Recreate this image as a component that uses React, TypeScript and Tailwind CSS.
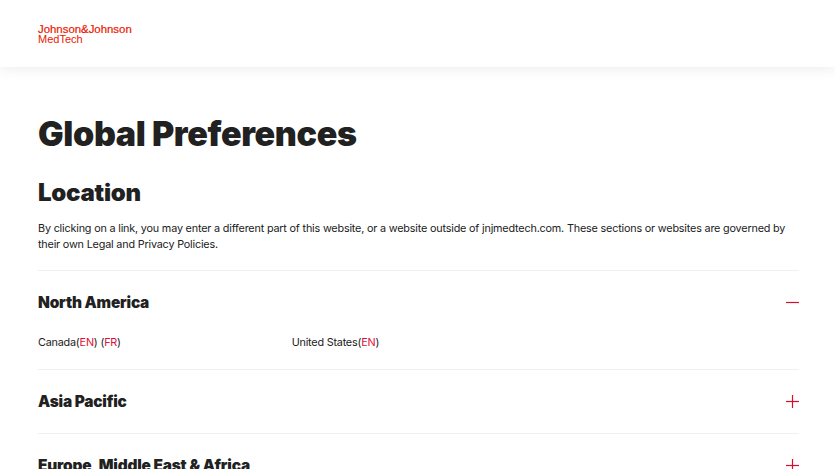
import React from "react";

function Region({ title, open, children }: { title: string; open?: boolean; children?: React.ReactNode }) {
  return (
    <section className="border-t border-[#f0f0f0]">
      <div className="flex h-[63px] items-center justify-between">
        <h3 className="text-[15.4px] leading-[20px] font-black tracking-[-0.2px] text-[#212121]">{title}</h3>
        <svg width="13" height="13" viewBox="0 0 13 13" className="text-[#d3102f]" fill="none" stroke="currentColor" strokeWidth="1.2">
          <path d="M0 6.5H13" />
          {!open && <path d="M6.5 0V13" />}
        </svg>
      </div>
      {children}
    </section>
  );
}

export default function App() {
  return (
    <div className="h-[469px] overflow-hidden bg-white font-['Inter','Liberation_Sans',sans-serif] text-[#212121]">
      <header className="flex h-[67px] items-center bg-white px-[38px] shadow-[0_2px_12px_rgba(0,0,0,0.08)]">
        <div className="font-['Liberation_Sans',sans-serif] text-[11.4px] leading-[10px] text-[#eb1700]">
          <div className="[-webkit-text-stroke:0.2px_#eb1700]">Johnson&amp;Johnson</div>
          <div className="text-[11px]">MedTech</div>
        </div>
      </header>
      <main className="px-[38px] pr-[36px]">
        <h1 className="mt-[45px] text-[34px] leading-[44px] font-black tracking-[-0.35px]">Global Preferences</h1>
        <h2 className="mt-[21px] text-[24px] leading-[32px] font-black tracking-[-0.25px]">Location</h2>
        <p className="mt-[12px] text-[10.8px] leading-[16px] tracking-[-0.18px]">
          By clicking on a link, you may enter a different part of this website, or a website outside of jnjmedtech.com. These sections or websites are governed by their own Legal and Privacy Policies.
        </p>
        <div className="mt-[17px]">
          <Region title="North America" open>
            <div className="grid grid-cols-3 pt-[1px] pb-[18px] text-[10.8px] leading-[16px] tracking-[-0.2px]">
              <div>
                Canada(<span className="text-[#e0103a]">EN</span>) (<span className="text-[#e0103a]">FR</span>)
              </div>
              <div>
                United States(<span className="text-[#e0103a]">EN</span>)
              </div>
            </div>
          </Region>
          <Region title="Asia Pacific" />
          <Region title="Europe, Middle East &amp; Africa" />
        </div>
      </main>
    </div>
  );
}
